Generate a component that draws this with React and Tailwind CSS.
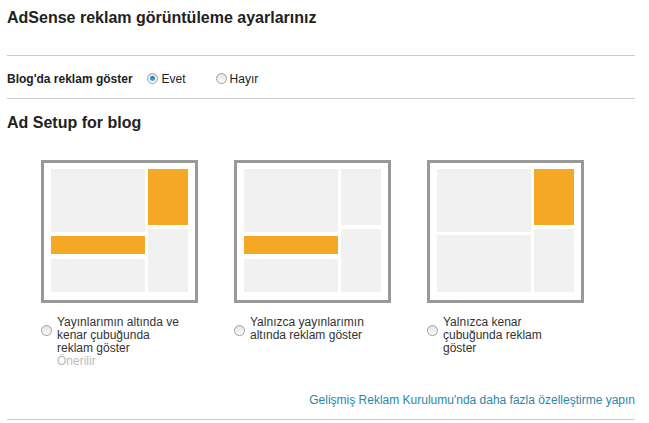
import React from 'react';

const Radio = ({ checked }) => (
  <span className="relative inline-flex h-[11px] w-[11px] shrink-0 items-center justify-center rounded-full border border-[#9f9f9f] bg-gradient-to-b from-[#e4e4e4] to-[#fbfbfb]">
    {checked && <span className="h-[5px] w-[5px] rounded-full bg-gradient-to-b from-[#1d6fa8] to-[#4fb3e8]" />}
  </span>
);

const Block = ({ className }) => <div className={className} />;

const Layout = ({ variant }) => {
  const gray = 'bg-[#f1f1f1]';
  const orange = 'bg-[#f5a726]';
  return (
    <div className="box-border h-[143px] w-[157px] border-[3px] border-[#999999] bg-white px-[7px] pt-[6px]">
      <div className="flex h-[123px] gap-[3px]">
        <div className="flex w-[94px] flex-col">
          {variant === 'sidebar' ? (
            <>
              <Block className={`h-[63px] ${gray}`} />
              <Block className={`mt-[3px] h-[57px] ${gray}`} />
            </>
          ) : (
            <>
              <Block className={`h-[63px] ${gray}`} />
              <Block className={`mt-[4px] h-[18px] ${orange}`} />
              <Block className={`mt-[5px] h-[33px] ${gray}`} />
            </>
          )}
        </div>
        <div className="flex w-[40px] flex-col gap-[4px]">
          <Block className={`h-[56px] ${variant === 'posts' ? gray : orange}`} />
          <Block className={`h-[63px] ${gray}`} />
        </div>
      </div>
    </div>
  );
};

const options = [
  { variant: 'both', label: 'Yayınlarımın altında ve kenar çubuğunda reklam göster', note: 'Önerilir' },
  { variant: 'posts', label: 'Yalnızca yayınlarımın altında reklam göster' },
  { variant: 'sidebar', label: 'Yalnızca kenar çubuğunda reklam göster' },
];

export default function App() {
  return (
    <div className="min-h-[423px] bg-white px-[7px] font-['Liberation_Sans',Arial,sans-serif] text-[#222]">
      <div className="w-[628px]">
        <div className="border-b border-[#cccccc] pt-[8px] pb-[27px]">
          <h1 className="text-[16px] font-bold leading-[20px] text-[#222]">AdSense reklam görüntüleme ayarlarınız</h1>
        </div>

        <div className="flex h-[43px] items-center border-b border-[#cccccc] pt-[3px] text-[12px]">
          <span className="font-bold">Blog'da reklam göster</span>
          <label className="ml-[14px] flex items-center gap-[4px]">
            <Radio checked />
            <span>Evet</span>
          </label>
          <label className="ml-[30px] flex items-center gap-[3px]">
            <Radio />
            <span>Hayır</span>
          </label>
        </div>

        <h2 className="pt-[14px] text-[16px] font-bold leading-[20px]">Ad Setup for blog</h2>

        <div className="mt-[27px] flex gap-[36px] pl-[34px]">
          {options.map((o) => (
            <div key={o.variant} className="w-[157px]">
              <Layout variant={o.variant} />
              <div className="mt-[13px] flex gap-[5px]">
                <div className="pt-[3px]">
                  <Radio />
                </div>
                <div className="w-[125px] text-[12px] leading-[13px] text-[#333]">
                  <div>{o.label}</div>
                  {o.note && <div className="text-[#bbbbbb]">{o.note}</div>}
                </div>
              </div>
            </div>
          ))}
        </div>

        <div className="mt-[25px] border-b border-[#cccccc] pb-[12px] text-right text-[12px] leading-[14px]">
          <a className="text-[#2b87a7]">Gelişmiş Reklam Kurulumu'nda daha fazla özelleştirme yapın</a>
        </div>
      </div>
    </div>
  );
}
